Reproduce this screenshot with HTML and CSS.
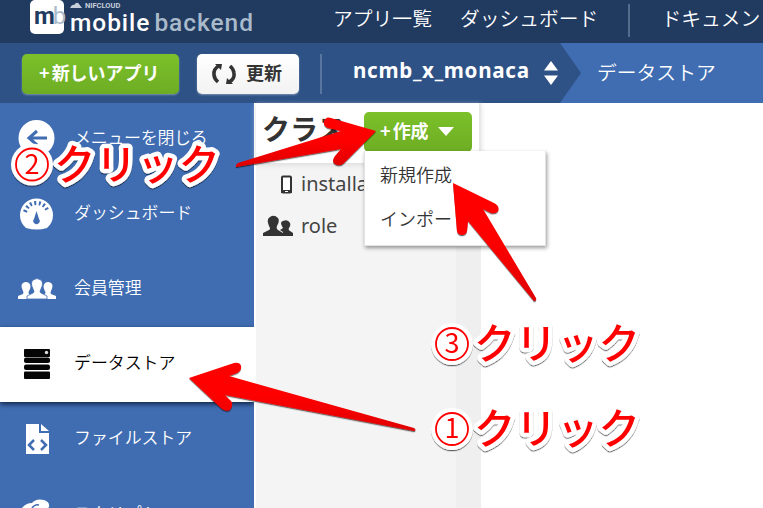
FILE: index.html
```html
<!DOCTYPE html>
<html lang="ja">
<head>
<meta charset="utf-8">
<title>mobile backend</title>
<link rel="stylesheet" href="styles.css">
</head>
<body>
<div class="app">
  <header class="top">
    <div class="logo">
      <div class="mark">m<span>b</span></div>
      <div class="brand">
        <div class="cloud"><svg width="13" height="7" viewBox="0 0 13 7"><path d="M0 6Q2 2 4 3Q7-1 9 2L12 6Z" fill="#c5d0da"/></svg>NIFCLOUD</div>
        <div class="name">mobile <span>backend</span></div>
      </div>
    </div>
    <nav class="links">
      <a>アプリ一覧</a><a>ダッシュボード</a><i></i><a>ドキュメン</a>
    </nav>
  </header>
  <div class="bar">
    <button class="btn green new">+<span>新しいアプリ</span></button>
    <button class="btn white">
      <svg width="26" height="22" viewBox="0 0 26 22"><g fill="none" stroke="#333" stroke-width="3.600"><path d="M8.500 2.500Q2 6 3 12Q3.500 16 7 19"/><path d="M17.500 19.500Q24 16 23 10Q22.500 6 19 3"/></g><path d="M4 1h7l-1 6zM22 21h-7l1-6z" fill="#333"/></svg>更新
    </button>
    <i class="rule"></i>
    <div class="current"><span>ncmb_x_monaca</span><svg width="14" height="24" viewBox="0 0 14 24"><path d="M7 0l7 9.500H0zM7 24l7-9.500H0z" fill="#fff"/></svg></div>
    <div class="crumb"><svg width="22" height="60" viewBox="0 0 22 60"><path d="M0 0L21 30L0 60Z" fill="#2e5286"/></svg><span>データストア</span></div>
  </div>
  <main class="main">
    <aside class="side">
      <div class="item first"><svg width="38" height="38" viewBox="0 0 38 38"><circle cx="18.500" cy="19" r="18" fill="#fff"/><path d="M29 19H12M19 12l-8 7 8 7" fill="none" stroke="#406db2" stroke-width="3"/></svg><span>メニューを閉じる</span></div>
      <div class="item"><svg width="38" height="34" viewBox="0 0 38 34"><path d="M8 31Q2 26 2 18A16.500 16.500 0 0 1 35 18Q35 26 29 31Q19 34 8 31Z" fill="#fff"/><path d="M7 15Q10 6 18.500 6T30 15" fill="none" stroke="#406db2" stroke-width="4" stroke-dasharray="2 2.500"/><path d="M18.500 14l2.500 8a3.200 3.200 0 1 1-5 0z" fill="#406db2"/></svg><span>ダッシュボード</span></div>
      <div class="item"><svg width="38" height="22" viewBox="0 0 38 22"><g fill="#fff"><path d="M0 21v-3l5-2q1-1 0-3-3-6 0-8 3-2 6 0 3 3 0 8-1 2 0 3l3 2v3zM38 21v-3l-5-2q-1-1 0-3 3-6 0-8-3-2-6 0-3 3 0 8 1 2 0 3l-3 2v3z"/><path stroke="#406db2" stroke-width=".8" d="M9 21v-3l6-3q2-1 0-4-3-6 0-9 4-3 8 0 3 3 0 9-2 3 0 4l6 3v3z"/></g></svg><span>会員管理</span></div>
      <div class="item active"><svg width="38" height="32" viewBox="0 0 38 32"><g fill="#050505"><rect x="6" y="1" width="26" height="8" rx="1"/><rect x="6" y="9.500" width="26" height="5.500" rx="2"/><rect x="6" y="16.500" width="26" height="5.500" rx="2"/><rect x="6" y="23.500" width="26" height="7.500" rx="1"/></g><circle cx="28.500" cy="4.500" r="1.700" fill="#ddd"/></svg><span>データストア</span></div>
      <div class="item"><svg width="38" height="32" viewBox="0 0 38 32"><path d="M8 1h13v9h10v21H8zM23 1l8 7h-8z" fill="#fff"/><path d="M16 17l-5 5 5 5M23 17l5 5-5 5" fill="none" stroke="#406db2" stroke-width="2.500"/></svg><span>ファイルストア</span></div>
      <div class="item last"><svg width="38" height="34" viewBox="0 0 38 34"><path d="M4 9Q8 4 14 4Q18-1 26 1Q32 3 31 8L28 12L35 20L20 33L5 22Z" fill="#fff"/><path d="M14 9q3-4 7-3" stroke="#406db2" stroke-width="1.500" fill="none"/></svg><span>スクリプト</span></div>
    </aside>
    <section class="classes">
      <div class="head"><h1>クラス</h1>
        <div class="create">
          <button class="btn green make">+<span>作成</span><svg width="16" height="11" viewBox="0 0 16 11"><path d="M0 1h16L8 10z" fill="#fff"/></svg></button>
          <div class="menu"><div>新規作成</div><div>インポー</div></div>
        </div>
      </div>
      <div class="list">
        <div class="row"><svg width="32" height="22" viewBox="0 0 32 22"><rect x="19" y="3.500" width="9" height="16" rx="1" fill="#fff" stroke="#333" stroke-width="2"/><path d="M18 17h11v3H18z" fill="#333"/><path d="M22 18.500h3" stroke="#fff"/></svg><span>installation</span></div>
        <div class="row"><svg width="32" height="22" viewBox="0 0 32 22"><path d="M0 21v-3l6-3q2-1 0-4-3-7 1-9 4-3 8 1 2 3-1 8-1 3 1 4l5 3v3zM20 21v-4l-3-2 3-2q-4-6 0-7 5-2 7 2 1 2-1 5-1 2 1 3l3 2v3z" fill="#333"/></svg><span>role</span></div>
      </div>
    </section>
  </main>
  <svg class="notes" width="763" height="508" viewBox="0 0 763 508">
    <defs>
      <filter id="s" x="-10%" y="-20%" width="120%" height="150%"><feDropShadow dx="0" dy="1.200" stdDeviation=".6" flood-color="#000" flood-opacity=".6"/></filter>
      <linearGradient id="r" x1="0" y1="0" x2="0" y2="1"><stop offset=".45" stop-color="#f00"/><stop offset="1" stop-color="#e00000"/></linearGradient>
    </defs>
    <g fill="url(#r)" filter="url(#s)">
      <path d="M376 131L331 118Q326 116 324 121Q323 126 328 128L341 131L238 163Q235 165 236 167L341 149L335 156Q331 161 335 164Q340 167 344 163Z"/>
      <path d="M453 183L494 203Q500 206 498 211Q496 214 491 213L483 209L536 298Q537 301 534 301L468 221L467 231Q466 235 462 235Q458 235 457 231Z"/>
      <path d="M189 378L234 363Q240 362 241 366Q242 370 237 373L229 376L414 428Q417 430 414 431L225 395L231 401Q234 405 230 410Q226 412 222 409Z"/>
    </g>
    <g class="callout" filter="url(#s)">
      <g><circle class="halo" cx="32" cy="164.500" r="21"/><circle cx="32" cy="164.500" r="16"/><text class="num" x="32" y="173.500" text-anchor="middle">2</text><text x="54" y="179.500" textLength="166">クリック</text></g>
      <g><circle class="halo" cx="452" cy="344" r="21"/><circle cx="452" cy="344" r="16"/><text class="num" x="452" y="353" text-anchor="middle">3</text><text x="474" y="359" textLength="166">クリック</text></g>
      <g><circle class="halo" cx="452" cy="429" r="21"/><circle cx="452" cy="429" r="16"/><text class="num" x="452" y="438" text-anchor="middle">1</text><text x="474" y="444" textLength="166">クリック</text></g>
    </g>
  </svg>
</div>
</body>
</html>
```
FILE: styles.css
```css
* { box-sizing: border-box; }
body { margin: 0; overflow: hidden; font-family: "Noto Sans", "Noto Sans CJK JP", sans-serif; color: #333; background: #fff; }
.app { position: relative; width: 763px; height: 508px; overflow: hidden; display: flex; flex-direction: column; white-space: nowrap; }
.top { height: 43px; flex: none; background: #213a60; display: flex; }
.logo { width: 333px; display: flex; padding-left: 30px; }
.mark { width: 34px; height: 34px; background: #fff; border-radius: 5px; color: #213a60; font: bold 24px/32px "Roboto", sans-serif; letter-spacing: -2px; padding-left: 4px; }
.mark span { color: #a9bacb; font-weight: 400; }
.brand { padding: 2px 0 0 6px; }
.cloud { display: flex; gap: 2px; font: bold 7.5px/8px "Roboto", sans-serif; color: #c5d0da; height: 7px; }
.name { font: 500 24.5px/27px "Roboto", sans-serif; color: #fff; letter-spacing: .95px; }
.name span { color: #a9bacb; margin-left: -3px; }
.links { display: flex; align-items: flex-start; color: #fff; font-size: 19.800px; line-height: 36px; font-family: "Noto Sans CJK JP", sans-serif; font-weight: 350; }
.links a:nth-child(2) { margin-left: 28px; }
.links i { width: 2px; height: 33px; background: #556b8b; margin: 4px 31px 0 30px; }
.bar { height: 60px; flex: none; background: #2e5286; display: flex; align-items: flex-start; padding-left: 22px; }
.btn { border: 0; border-radius: 5px; display: flex; align-items: center; padding: 0; font: bold 18px/38px "Noto Sans CJK JP", sans-serif; box-shadow: 0 1px 2px #ffffff60; }
.btn span { margin-left: 2px; }
.green { background: linear-gradient(#7cc12a, #6dad24); color: #fff; }
.new { width: 157px; height: 40px; margin-top: 11px; padding: 0 0 5px 17px; }
.white { width: 102px; height: 40px; margin: 11px 0 0 18px; padding: 0 0 4px 14px; gap: 9px; background: linear-gradient(#fff, #f2f2f2); color: #333; }
.white svg { margin-top: 3px; }
.rule { width: 2px; height: 40px; background: #5876a0; margin: 11px 0 0 21px; }
.current { width: 238px; height: 60px; display: flex; align-items: center; gap: 14px; padding: 0 0 7px 31px; color: #fff; font: bold 20.600px "Noto Sans", sans-serif; letter-spacing: .7px; }
.current svg { margin-top: 6px; }
.crumb { flex: 1; height: 60px; background: #406db2; display: flex; gap: 15px; color: #fff; font: 350 19.800px/58px "Noto Sans CJK JP", sans-serif; }
.main { flex: 1; display: flex; min-height: 0; }
.side { width: 254px; background: #406db2; color: #fff; overflow: hidden; }
.item { height: 75px; display: flex; align-items: center; gap: 18px; padding: 0 0 1px 18px; font: 350 16.900px/24px "Noto Sans CJK JP", sans-serif; }
.item span { padding-bottom: 4px; }
.item.first { height: 74px; padding-bottom: 5px; }
.item.first span { padding: 0 0 1px; letter-spacing: -.2px; }
.item.active { background: #fff; color: #000; position: relative; box-shadow: 0 2px 5px #102040; }
.last svg { margin-top: 4px; }
.last span { padding: 0 0 3px; }
.classes { width: 227px; border-left: 2px solid #fff; background: linear-gradient(90deg, #f4f4f4 200px, #efefef 200px); }
.head { position: relative; height: 60px; background: #fff; display: flex; padding: 9px 8px 0 6px; justify-content: space-between; box-shadow: 0 2px 5px #ddd; border-right: 2px solid #e8e8e8; }
h1 { margin: 0; font: bold 28px/32px "Noto Sans CJK JP", sans-serif; width: 84px; }
.create { position: relative; width: 108px; margin-right: -1px; }
.make { width: 108px; height: 40px; padding: 0 0 5px 16px; gap: 0; box-shadow: none; }
.make svg { margin: 3px 0 0 9px; }
.menu { position: absolute; left: 0; top: 39px; width: 182px; height: 95px; background: #fff; box-shadow: 1px 2px 4px #0006; border: 1px solid #e3e3e3; border-top: 0; padding: 1px 0 0 15px; font: 350 18px/44px "Noto Sans CJK JP", sans-serif; }
.list { padding-top: 0; }
.row { height: 42px; display: flex; align-items: center; gap: 6px; padding-left: 7px; font-size: 20px; color: #444; }
.row span { padding-bottom: 2px; }
.notes { position: absolute; left: 0; top: 0; }
.callout { font: 500 41.500px "Noto Sans CJK JP", sans-serif; }
.callout text { fill: #f00; stroke: #fff; stroke-width: 9px; stroke-linejoin: round; paint-order: stroke; }
.callout circle { fill: #fff; stroke: #f00; stroke-width: 1.800px; }
.callout .halo { stroke: none; }
.callout .num { font-size: 27px; font-weight: 400; stroke: none; }
```
